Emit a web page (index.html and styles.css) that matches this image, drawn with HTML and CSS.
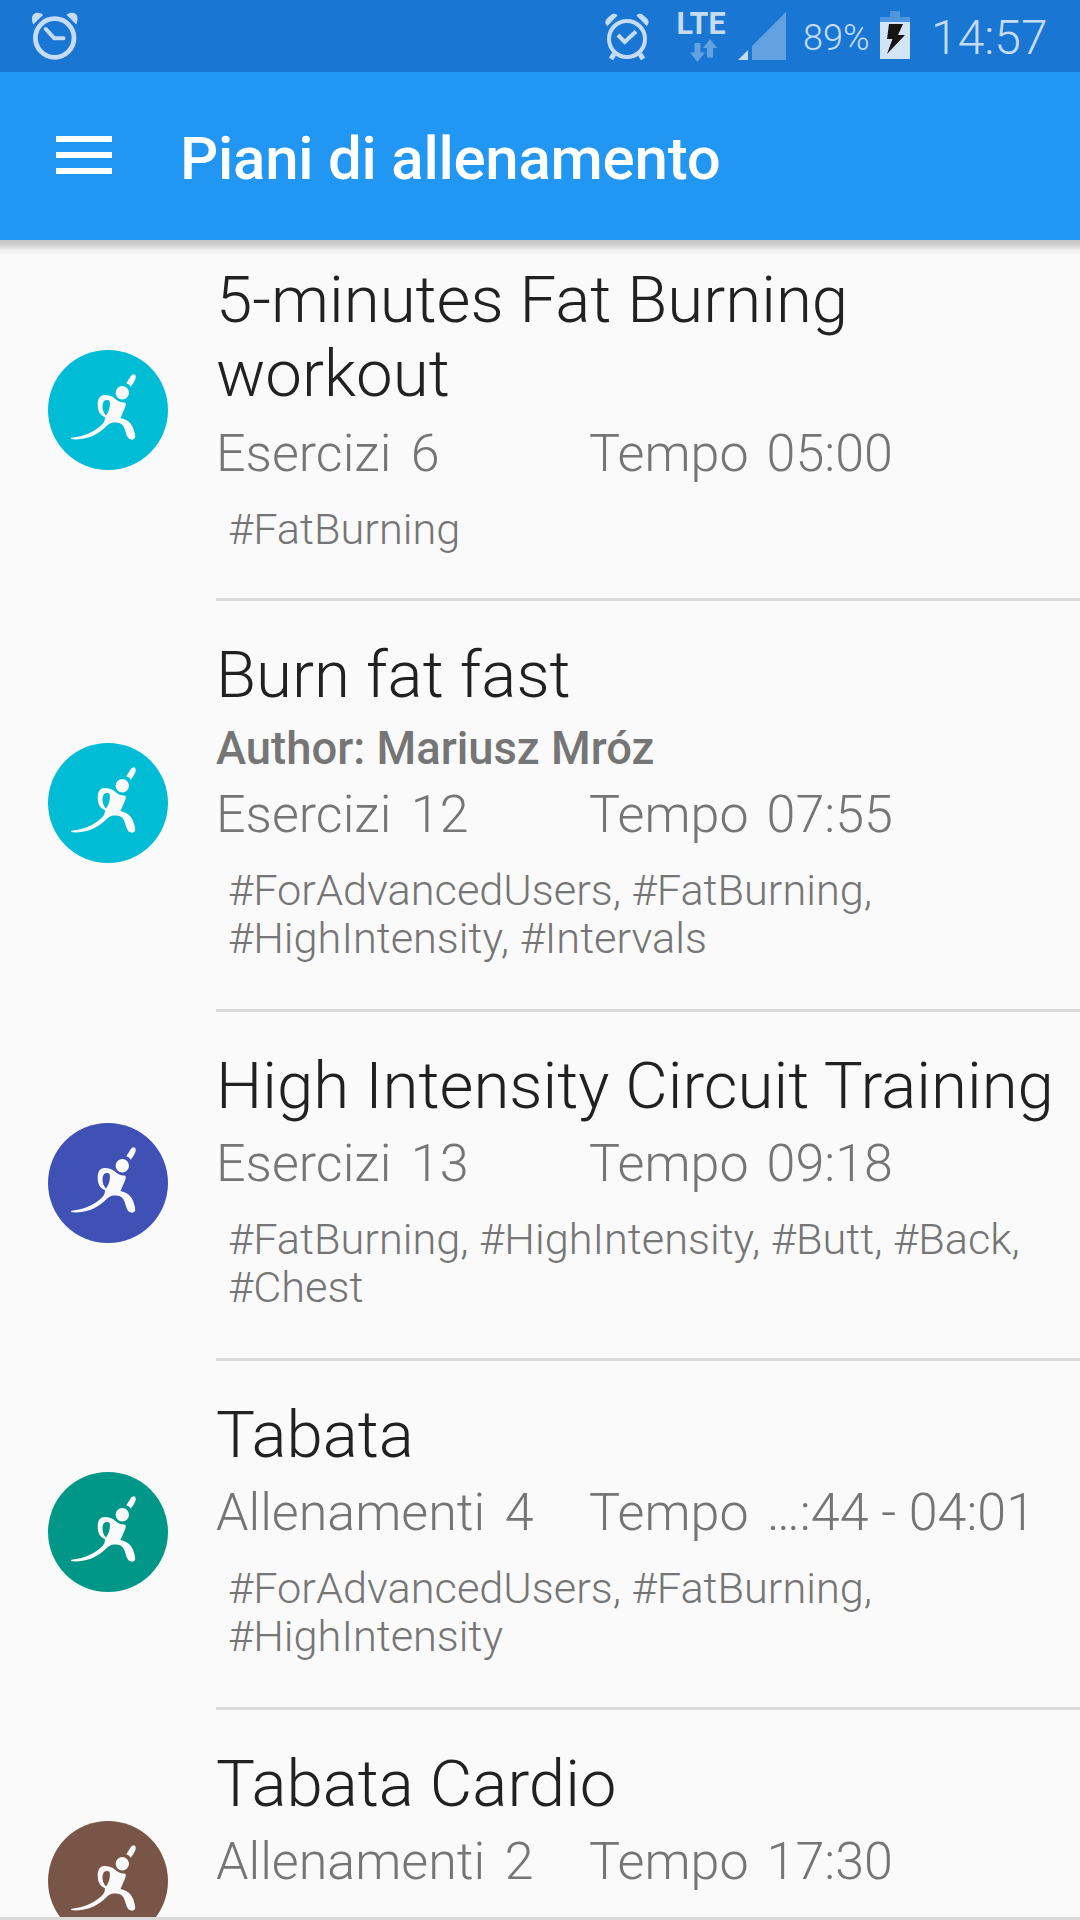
FILE: index.html
```html
<!DOCTYPE html>
<html lang="it">
<head>
<meta charset="utf-8">
<title>Piani di allenamento</title>
<link rel="stylesheet" href="styles.css">
</head>
<body>
<svg class="defs" width="0" height="0" aria-hidden="true">
  <symbol id="athlete" viewBox="0 0 120 120">
    <circle cx="74.3" cy="42.7" r="6.7"/>
    <path d="M78.3 33.3L83 25.8Q84.7 23.6 86.3 24.3Q88.2 25 87.7 28Q86.8 31.500 82.700 36.800Q81.500 34 78.300 33.300Z"/>
    <path fill-rule="evenodd" d="M67.800 49.300C64.500 46 61 45 56.500 45C51.500 45.300 49.700 49 49.700 55C49.800 61 52 65.300 57 67.200C57 70.500 56 72.500 53.500 75C46 82.300 36 86.300 23.500 87.700Q22.500 88.700 23.800 89.300C35 90 46 87.500 56 78.500C60 74.800 62 72.600 65.500 72.500C70.500 72.300 74.500 73.500 76 77.500C78 82 78.500 89.700 84 89.700Q88 89.300 87 84.500C85.300 76 82 70 72.500 68L77 57.500Q79 52.500 76 52.500C72 52.500 70 51.300 67.800 49.300ZM56 51C58 49.500 61 49.500 61.700 51.500C62.500 56 61 61.500 58 65.500C54.500 62 53.200 55 56 51Z"/>
  </symbol>
</svg>
<div class="screen">
  <div class="status">
    <svg class="clock" viewBox="0 0 48 48" width="48" height="48">
      <circle cx="23.700" cy="26" r="19.300" fill="none" stroke="#c5dcf4" stroke-width="4.800"/>
      <path d="M14.800 17L23.300 26.300H32.500" fill="none" stroke="#c5dcf4" stroke-width="4" stroke-linecap="round" stroke-linejoin="round"/>
      <path d="M2.300 12.500C.3 7.500 0 1.300 6 .7C9 .5 11 1.500 12 2.900ZM45.300 12.500C47.300 7.500 47.600 1.300 41.600 .7C38.600 .5 36.600 1.500 35.600 2.900Z" fill="#c5dcf4"/>
    </svg>
    <div class="status-right">
      <svg viewBox="0 0 46 50" width="46" height="50">
        <g fill="none" stroke="#c5dcf4"><circle cx="23" cy="27" r="18" stroke-width="4"/><path d="M14 23L20.700 30L32 19.500" stroke-width="4"/><path d="M10 42L7 47M36 42L39 47" stroke-width="5"/></g>
        <path d="M3.500 14C1 12 .6 9 3 6.500L7 3C9 1 12 1.500 13.500 3.500ZM42.500 14C45 12 45.400 9 43 6.500L39 3C37 1 34 1.500 32.500 3.500Z" fill="#c5dcf4"/>
      </svg>
      <div class="network">
        <span class="lte">LTE</span>
        <svg viewBox="0 0 28 24" width="28" height="24" fill="#63a1e1"><path d="M4.500 5H10.500V14.500H15L7.500 24L0 14.500H4.500ZM17 19.500V10H13L20 1L27 10H23V19.500Z"/></svg>
      </div>
      <svg class="signal" viewBox="0 0 48 48" width="48" height="48"><path d="M0 48L10 38V48Z" fill="#c5dcf4"/><path d="M14 48V34L48 0V48Z" fill="#63a1e1"/></svg>
      <span class="percent">89%</span>
      <svg class="battery" viewBox="0 0 30 48" width="30" height="48"><path d="M10 0H20V6H30V11H0V6H10Z" fill="#5096de"/><path d="M0 11H30V48H0Z" fill="#d2e4f6"/><path d="M9 13H23L18 24H25L7 43L12.500 28H7Z" fill="#151515"/></svg>
      <span class="time">14:57</span>
    </div>
  </div>
  <header class="toolbar">
    <div class="menu"><i></i><i></i><i></i></div>
    <h1>Piani di allenamento</h1>
  </header>
  <main class="list">
    <article class="item first">
      <div class="avatar cyan"><svg><use href="#athlete"/></svg></div>
      <div class="content">
        <h2>5-minutes Fat Burning workout</h2>
        <div class="stats"><div class="count"><span>Esercizi</span><span>6</span></div><div class="count"><span>Tempo</span><span>05:00</span></div></div>
        <p class="tags">#FatBurning</p>
      </div>
    </article>
    <article class="item">
      <div class="avatar cyan"><svg><use href="#athlete"/></svg></div>
      <div class="content">
        <h2>Burn fat fast</h2>
        <p class="author">Author: Mariusz Mróz</p>
        <div class="stats"><div class="count"><span>Esercizi</span><span>12</span></div><div class="count"><span>Tempo</span><span>07:55</span></div></div>
        <p class="tags">#ForAdvancedUsers, #FatBurning,<br>#HighIntensity, #Intervals</p>
      </div>
    </article>
    <article class="item">
      <div class="avatar indigo"><svg><use href="#athlete"/></svg></div>
      <div class="content">
        <h2>High Intensity Circuit Training</h2>
        <div class="stats"><div class="count"><span>Esercizi</span><span>13</span></div><div class="count"><span>Tempo</span><span>09:18</span></div></div>
        <p class="tags">#FatBurning, #HighIntensity, #Butt, #Back,<br>#Chest</p>
      </div>
    </article>
    <article class="item">
      <div class="avatar teal"><svg><use href="#athlete"/></svg></div>
      <div class="content">
        <h2>Tabata</h2>
        <div class="stats"><div class="count"><span>Allenamenti</span><span>4</span></div><div class="count"><span>Tempo</span><span>…:44 - 04:01</span></div></div>
        <p class="tags">#ForAdvancedUsers, #FatBurning,<br>#HighIntensity</p>
      </div>
    </article>
    <article class="item last">
      <div class="avatar brown"><svg><use href="#athlete"/></svg></div>
      <div class="content">
        <h2>Tabata Cardio</h2>
        <div class="stats"><div class="count"><span>Allenamenti</span><span>2</span></div><div class="count"><span>Tempo</span><span>17:30</span></div></div>
      </div>
    </article>
  </main>
  <div class="bottom"></div>
</div>
</body>
</html>
```
FILE: styles.css
```css
* { box-sizing: border-box; }
body, h1, h2, p { margin: 0; }
body { font-family: Roboto, sans-serif; background: #fafafa; }
.defs { display: block; }
.screen { width: 1080px; height: 1920px; overflow: hidden; display: flex; flex-direction: column; }

.status { flex: none; height: 72px; background: #1976d2; color: #c5dcf4; display: flex; justify-content: space-between; padding: 12px 0 0 31px; }
.status-right { display: flex; align-items: flex-start; width: 476px; }
.status-right svg { flex: none; }
.network { flex: none; width: 50px; margin-left: 26px; padding-top: 1px; display: flex; flex-direction: column; align-items: center; }
.lte { font: 700 30.500px/22px Roboto, sans-serif; }
.network svg { margin: 3px 0 0 5px; }
.signal { margin-left: 12px; }
.percent { flex: none; width: 66px; margin-left: 17px; font-size: 36px; line-height: 52px; font-weight: 350; }
.battery { margin: -1px 0 0 11px; }
.time { margin-left: 21px; font-size: 48px; line-height: 52px; font-weight: 350; }

.toolbar { flex: none; height: 168px; background: #2196f3; color: #fff; display: flex; align-items: center; padding: 5px 0 0 56px; position: relative; z-index: 1; }
.toolbar::after { content: ""; position: absolute; left: 0; top: 100%; width: 100%; height: 16px; background: linear-gradient(#c4c4c4, #d0d0d0 30%, #f0f0f0 65%, #fafafa00); }
.menu { width: 56px; display: grid; gap: 10px; margin-bottom: 7px; }
.menu i { height: 6px; background: #fff; }
.toolbar h1 { margin-left: 68px; font-size: 60px; line-height: 70px; font-weight: 500; letter-spacing: -.25px; }

.list { flex: 1; min-height: 0; overflow: hidden; }
.item { display: flex; align-items: center; height: 349px; }
.avatar { flex: none; width: 120px; height: 120px; margin: 0 48px 7px; border-radius: 50%; }
.avatar svg { display: block; width: 120px; height: 120px; fill: #fafafa; }
.cyan { background: #00bcd4; }
.indigo { background: #3f51b5; }
.teal { background: #009688; }
.brown { background: #795548; }
.content { flex: 1; align-self: stretch; padding-top: 37px; border-bottom: 3px solid #dadada; }
.first { margin-top: -14px; height: 375px; }
.item:nth-child(2) { height: 411px; }
h2 { color: #212121; font-size: 65.4px; line-height: 74px; font-weight: 300; max-width: 860px; white-space: nowrap; }
.first h2 { max-width: 760px; white-space: normal; }
.stats { display: grid; grid-template-columns: 373px 1fr; margin-top: 11px; color: #757575; font-size: 52px; line-height: 60px; font-weight: 300; }
.first .stats { margin-top: 13px; }
.author { color: #757575; font-size: 45.4px; line-height: 53px; margin: 10px 0 0; font-weight: 500; }
.author + .stats { margin-top: 10px; }
.count { display: flex; gap: 18px; }
.count:first-child { gap: 19.5px; }
.tags { color: #757575; font-size: 43.3px; line-height: 48px; font-weight: 300; padding: 22px 0 0 12px; }
.bottom { flex: none; height: 3px; background: #dadada; }
```
